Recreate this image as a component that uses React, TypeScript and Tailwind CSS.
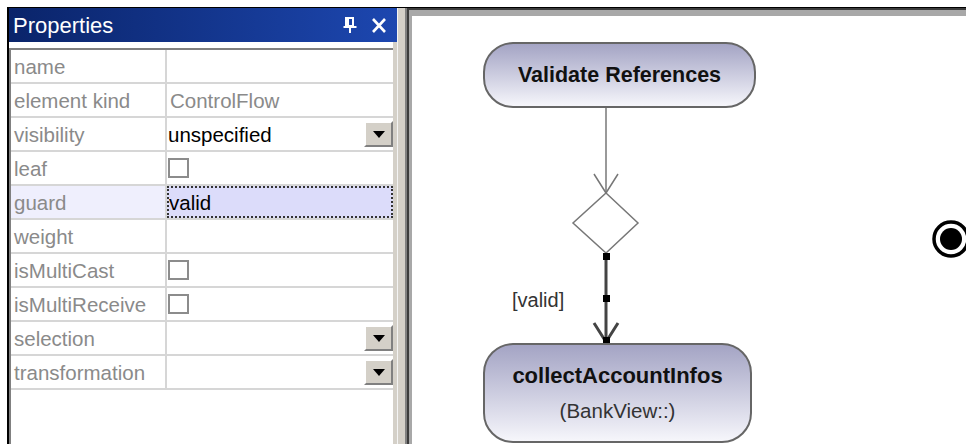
import React from 'react';

type Row = {
  label: string;
  kind?: 'text' | 'check' | 'select';
  value?: string;
  muted?: boolean;
  active?: boolean;
};

const rows: Row[] = [
  { label: 'name' },
  { label: 'element kind', kind: 'text', value: 'ControlFlow', muted: true },
  { label: 'visibility', kind: 'select', value: 'unspecified' },
  { label: 'leaf', kind: 'check' },
  { label: 'guard', kind: 'text', value: 'valid', active: true },
  { label: 'weight' },
  { label: 'isMultiCast', kind: 'check' },
  { label: 'isMultiReceive', kind: 'check' },
  { label: 'selection', kind: 'select' },
  { label: 'transformation', kind: 'select' },
];

const font = { fontFamily: '"Liberation Sans", Arial, sans-serif' };

function DropButton() {
  return (
    <div className="ml-auto w-[29px] h-[26px] bg-[#d4d0c8] border-2 border-t-white border-l-white border-r-[#808080] border-b-[#808080] flex items-center justify-center">
      <svg width="12" height="7" viewBox="0 0 12 7">
        <path d="M0 0h12L6 7z" fill="#000" />
      </svg>
    </div>
  );
}

function PropertyRow({ row }: { row: Row }) {
  return (
    <div className="flex h-[34px] border-b-2 border-[#d6d6d6]">
      <div
        className={`w-[156px] shrink-0 pl-[3px] pt-[2px] flex items-center text-[#8a8a8a] border-r-2 border-[#d6d6d6] ${
          row.active ? 'bg-[#efeffd]' : ''
        }`}
      >
        {row.label}
      </div>
      <div
        className={`flex-1 flex items-center ${
          row.active ? 'bg-[#dcdcfa] border-2 border-dotted border-[#333] pt-[2px]' : 'pl-[1px]'
        }`}
      >
        {row.kind === 'text' && (
          <span className={row.muted ? 'text-[#8a8a8a] pl-[2px] pt-[2px]' : 'text-black'}>{row.value}</span>
        )}
        {row.kind === 'check' && <div className="w-[21px] h-[20px] border-2 border-[#8c8c8c] bg-white" />}
        {row.kind === 'select' && (
          <>
            <span className="text-black pt-[2px]">{row.value}</span>
            <DropButton />
          </>
        )}
      </div>
    </div>
  );
}

function PropertiesPanel() {
  return (
    <div className="w-[390px] shrink-0 flex flex-col border-l-2 border-black" style={font}>
      <div className="h-[34px] flex items-center pl-[4px] pr-[10px] bg-gradient-to-r from-[#0a246a] to-[#1d47b0] text-white">
        <span className="text-[22px]">Properties</span>
        <svg className="ml-auto" width="14" height="17" viewBox="0 0 14 17">
          <path d="M3 1h7v8H3z M5 1v8 M0.5 10h13 M7 10v6" stroke="#fff" strokeWidth="2" fill="none" />
        </svg>
        <svg className="ml-[14px]" width="16" height="15" viewBox="0 0 16 15">
          <path d="M2 1l12 13M14 1L2 14" stroke="#fff" strokeWidth="2.6" />
        </svg>
      </div>
      <div className="flex-1 flex bg-[#d4d0c8]">
        <div className="w-[384px] flex flex-col bg-white pt-[6px]">
          <div className="flex-1 border-t-2 border-l-2 border-[#808080] text-[20.5px] leading-none">
            {rows.map((r) => (
              <PropertyRow key={r.label} row={r} />
            ))}
          </div>
        </div>
      </div>
    </div>
  );
}

function Diagram() {
  const nodeBg = 'bg-gradient-to-b from-[#a4a4c4] to-[#f6f6fb] border-2 border-[#666]';
  return (
    <div className="flex-1 border-l-2 border-[#808080] bg-[#d4d0c8]">
      <div className="h-full border-l-2 border-t-2 border-[#3c3c3c]">
        <div className="h-full border-l-[3px] border-t-[6px] border-[#a8a8a8] bg-white relative overflow-hidden" style={font}>
          <svg className="absolute left-0 top-0" width="560" height="430">
            <line x1="194" y1="92" x2="194" y2="177" stroke="#777" strokeWidth="1.5" />
            <path d="M182 158L194 177L206 158" stroke="#777" strokeWidth="1.5" fill="none" />
            <path d="M194 177L226 207L194 237L161 207Z" stroke="#777" strokeWidth="1.5" fill="#fff" />
            <line x1="194" y1="237" x2="194" y2="326" stroke="#444" strokeWidth="3" />
            <path d="M182 307L194 326L206 307" stroke="#444" strokeWidth="3" fill="none" />
            <rect x="191" y="237" width="7" height="7" fill="#000" />
            <rect x="191" y="279" width="7" height="7" fill="#000" />
            <rect x="191" y="321" width="7" height="7" fill="#000" />
            <circle cx="539" cy="223" r="17" stroke="#000" strokeWidth="3.5" fill="#fff" />
            <circle cx="539" cy="223" r="11" fill="#000" />
          </svg>

          <div className={`absolute left-[71px] top-[26px] w-[273px] h-[66px] rounded-[30px] ${nodeBg} flex items-center justify-center`}>
            <span className="text-[21.5px] font-bold text-[#111]">Validate References</span>
          </div>

          <span className="absolute left-[100px] top-[269px] text-[20px] text-[#333]">[valid]</span>

          <div className={`absolute left-[71px] top-[327px] w-[269px] h-[100px] rounded-[30px] ${nodeBg} flex flex-col items-center pt-[17px]`}>
            <span className="text-[22px] font-bold text-[#111] leading-[28px]">collectAccountInfos</span>
            <span className="text-[20.5px] text-[#333] mt-[8px] leading-[26px]">(BankView::)</span>
          </div>
        </div>
      </div>
    </div>
  );
}

export default function App() {
  return (
    <div className="w-[966px] h-[444px] bg-white overflow-hidden pt-[7px] pl-[7px]">
      <div className="flex h-full border-t border-black">
        <PropertiesPanel />
        <div className="w-[8px] shrink-0 bg-[#d4d0c8] border-l border-[#f4f4f4]" />
        <Diagram />
      </div>
    </div>
  );
}
